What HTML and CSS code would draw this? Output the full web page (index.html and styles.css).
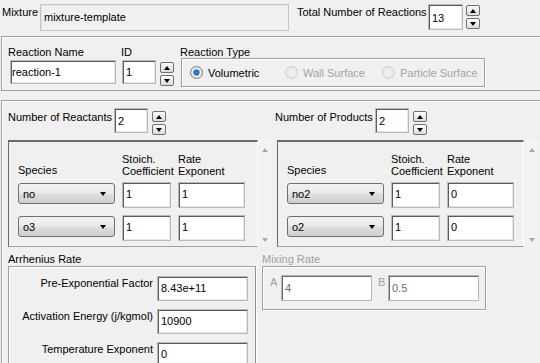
FILE: index.html
```html
<!DOCTYPE html>
<html>
<head>
<meta charset="utf-8">
<link rel="stylesheet" href="styles.css">
</head>
<body>
<div class="frame">
  <div class="top">
    <span class="lbl mix-lbl">Mixture</span>
    <div class="field disabled mix">mixture-template</div>
    <span class="lbl total-lbl">Total Number of Reactions</span>
    <div class="field total">13</div>
    <div class="spin spin-top"><span class="sb up"></span><span class="sb down"></span></div>
  </div>

  <div class="panel p2">
    <div class="col c-name">
      <span class="lbl head">Reaction Name</span>
      <div class="field name">reaction-1</div>
    </div>
    <div class="col c-id">
      <span class="lbl head">ID</span>
      <div class="idrow">
        <div class="field idf">1</div>
        <div class="spin"><span class="sb up"></span><span class="sb down"></span></div>
      </div>
    </div>
    <div class="col c-type">
      <span class="lbl head">Reaction Type</span>
      <div class="group radios">
        <span class="radio on"><span class="dot"></span>Volumetric</span>
        <span class="radio off"><span class="dot"></span>Wall Surface</span>
        <span class="radio off"><span class="dot"></span>Particle Surface</span>
      </div>
    </div>
  </div>

  <div class="panel p3">
    <div class="halves">
      <div class="half left">
        <div class="count-row">
          <span class="lbl cnt-lbl">Number of Reactants</span>
          <div class="field cnt">2</div>
          <div class="spin"><span class="sb up"></span><span class="sb down"></span></div>
        </div>
        <div class="list-wrap">
          <div class="list">
            <div class="grid">
              <span class="lbl h-species">Species</span>
              <span class="lbl h-two">Stoich.<br>Coefficient</span>
              <span class="lbl h-two">Rate<br>Exponent</span>
              <div class="combo"><span>no</span><span class="arrow"></span></div>
              <div class="field cell">1</div>
              <div class="field cell">1</div>
              <div class="combo"><span>o3</span><span class="arrow"></span></div>
              <div class="field cell">1</div>
              <div class="field cell">1</div>
            </div>
          </div>
          <div class="scroll"><span class="sa up"></span><span class="sa down"></span></div>
        </div>
      </div>
      <div class="half right">
        <div class="count-row">
          <span class="lbl cnt-lbl prod">Number of Products</span>
          <div class="field cnt">2</div>
          <div class="spin"><span class="sb up"></span><span class="sb down"></span></div>
        </div>
        <div class="list-wrap">
          <div class="list">
            <div class="grid">
              <span class="lbl h-species">Species</span>
              <span class="lbl h-two">Stoich.<br>Coefficient</span>
              <span class="lbl h-two">Rate<br>Exponent</span>
              <div class="combo"><span>no2</span><span class="arrow"></span></div>
              <div class="field cell">1</div>
              <div class="field cell">0</div>
              <div class="combo"><span>o2</span><span class="arrow"></span></div>
              <div class="field cell">1</div>
              <div class="field cell">0</div>
            </div>
          </div>
          <div class="scroll"><span class="sa up"></span><span class="sa down"></span></div>
        </div>
      </div>
    </div>

    <div class="rates">
      <div class="arr">
        <span class="lbl sec">Arrhenius Rate</span>
        <div class="group arr-box">
          <div class="arow"><span class="lbl rl">Pre-Exponential Factor</span><div class="field rf">8.43e+11</div></div>
          <div class="arow"><span class="lbl rl">Activation Energy (j/kgmol)</span><div class="field rf">10900</div></div>
          <div class="arow"><span class="lbl rl">Temperature Exponent</span><div class="field rf">0</div></div>
        </div>
      </div>
      <div class="mixing">
        <span class="lbl sec dis">Mixing Rate</span>
        <div class="group mix-box">
          <span class="lbl dis ab">A</span>
          <div class="field mf">4</div>
          <span class="lbl dis ab b">B</span>
          <div class="field mf">0.5</div>
        </div>
      </div>
    </div>
  </div>
</div>
</body>
</html>
```

FILE: styles.css
```css
* { box-sizing: border-box; }
html, body { margin: 0; padding: 0; }
body {
  background: #f0f0f0;
  font-family: "Liberation Sans", Arial, sans-serif;
  font-size: 11px;
  color: #000;
  width: 540px;
  height: 363px;
  overflow: hidden;
}
.frame { width: 540px; }

.lbl { display: block; line-height: 13px; white-space: nowrap; }

/* text fields */
.field {
  background: #fff;
  border: 1px solid #b9b9b9;
  box-shadow: inset 1px 1px 0 #5a5a5a, inset -1px -1px 0 #e8e8e8;
  padding: 0 0 0 3px;
  line-height: 13px;
  display: flex;
  align-items: center;
  white-space: nowrap;
  overflow: hidden;
}
.field.disabled { background: #f0f0f0; box-shadow: inset 1px 1px 0 #e2e2e2; border-color: #c5c5c5; }

/* spinner */
.spin { display: flex; flex-direction: column; gap: 2px; margin-left: 4px; margin-top: 2px; }
.sb {
  width: 14px; height: 11px;
  border: 1px solid #6f6f6f;
  border-radius: 2px;
  background: linear-gradient(#fdfdfd, #dcdcdc);
  position: relative;
}
.sb::after {
  content: "";
  position: absolute;
  left: 3px;
  border-left: 3.5px solid transparent;
  border-right: 3.5px solid transparent;
}
.sb.up::after { top: 3px; border-bottom: 4px solid #000; }
.sb.down::after { top: 3px; border-top: 4px solid #000; }

/* top row */
.top { display: flex; align-items: flex-start; height: 36px; padding: 4px 0 0 2px; }
.mix-lbl { width: 38px; margin-top: 2px; }
.mix { width: 249px; height: 27px; align-items: flex-start; padding-top: 6px; }
.total-lbl { width: 131px; margin-left: 8px; margin-top: 2px; }
.total { width: 35px; height: 26px; padding-top: 2px; }
.spin-top { margin-left: 3px; margin-top: 1px; }

/* panels */
.panel {
  margin-left: 1px;
  width: 545px;
  border: 1px solid #a0a0a0;
  box-shadow: inset 1px 1px 0 #fff;
}
.p2 { height: 55px; display: flex; padding: 9px 0 0 6px; }
.col { display: flex; flex-direction: column; }
.c-name { width: 113px; }
.name { width: 106px; height: 24px; margin: 1px 0 0 2px; padding-left: 1px; }
.c-id { width: 59px; }
.idrow { display: flex; align-items: flex-start; margin-top: 1px; }
.idf { width: 34px; height: 24px; margin-left: 1px; padding-top: 0; }
.idrow .spin { margin-left: 4px; margin-top: 2px; }
.c-type { width: 310px; }

.group { border: 1px solid #a0a0a0; box-shadow: 1px 1px 0 #fff, inset 1px 1px 0 #fff; }
.radios { width: 304px; height: 29px; margin: -1px 0 0 1px; display: flex; align-items: center; padding-left: 8px; }
.radio { display: flex; align-items: center; }
.radio .dot {
  width: 13px; height: 13px; border-radius: 50%;
  margin-right: 5px;
  position: relative;
}
.radio.on { width: 95px; }
.radio.on .dot {
  border: 1px solid #7a7a7a;
  background: radial-gradient(circle at 50% 50%, #3b8be0 0, #1d5fb8 2.6px, #cfe3f5 3.4px, #e9e9e9 5px);
}
.radio.off { color: #a3a3a3; width: 97px; }
.radio.off .dot { border: 1px solid #cdcdcd; background: radial-gradient(circle, #f4f4f4 0, #e6e6e6 6px); }

.p3 { height: 270px; margin-top: 9px; padding: 7px 0 0 6px; }
.halves { display: flex; height: 139px; }
.half.left { width: 267px; }
.half.right { width: 270px; }
.count-row { display: flex; align-items: flex-start; height: 32px; }
.cnt-lbl { width: 106px; margin-top: 3px; }
.cnt-lbl.prod { width: 100px; }
.cnt { width: 34px; height: 25px; padding-top: 1px; }
.count-row .spin { margin-left: 4px; margin-top: 3px; }

.list-wrap { display: flex; height: 107px; }
.list {
  width: 250px; height: 107px;
  border: 1px solid #a0a0a0;
  border-top: 2px solid #6a6a6a;
  border-left: 1px solid #6a6a6a;
  border-right-color: #fff;
  padding: 10px 0 0 9px;
  overflow: hidden;
}
.right .list { margin-left: 2px; width: 247px; }
.grid {
  display: grid;
  grid-template-columns: 97px 49px 67px;
  column-gap: 7px;
  row-gap: 0;
  grid-template-rows: 30px 33px 33px;
}
.h-species { align-self: end; padding-bottom: 5px; }
.h-two { line-height: 12px; align-self: end; padding-bottom: 5px; }
.combo {
  height: 21px;
  margin-top: 1px;
  border: 1px solid #707070;
  border-radius: 3px;
  background: linear-gradient(#f2f2f2 0, #ebebeb 45%, #dddddd 55%, #cfcfcf 100%);
  display: flex; align-items: center; justify-content: space-between;
  padding: 0 8px 0 4px;
}
.combo .arrow { width: 0; height: 0; border-left: 3.5px solid transparent; border-right: 3.5px solid transparent; border-top: 4px solid #000; }
.cell { height: 26px; align-items: flex-start; padding-top: 5px; }

.scroll { width: 13px; position: relative; background: #f3f3f3; margin-left: 1px; }
.right .scroll { margin-left: 2px; }
.sa { position: absolute; left: 3px; width: 0; height: 0; border-left: 3.5px solid transparent; border-right: 3.5px solid transparent; }
.sa.up { top: 8px; border-bottom: 4px solid #a8a8a8; }
.sa.down { bottom: 5px; border-top: 4px solid #a8a8a8; }

.rates { display: flex; margin-top: 6px; }
.arr { width: 248px; }
.sec { height: 13px; }
.arr-box { margin-top: 0; height: 110px; padding-top: 9px; border-right-color: #909090; }
.arow { display: flex; align-items: flex-start; margin-bottom: 8px; }
.rl { width: 144px; text-align: right; margin-top: 1px; }
.rf { width: 91px; height: 25px; margin-left: 4px; align-items: flex-start; padding-top: 5px; }

.mixing { margin-left: 6px; width: 224px; }
.dis { color: #a0a0a0; }
.mix-box { height: 44px; display: flex; align-items: flex-start; padding: 8px 0 0 7px; }
.ab { width: 11px; margin-top: 1px; }
.ab.b { width: 10px; margin-left: 6px; }
.mf { width: 91px; height: 26px; color: #6d6d6d; align-items: flex-start; padding-top: 6px; box-shadow: inset 1px 1px 0 #6a6a6a; border-color: #b5b5b5; }
```
